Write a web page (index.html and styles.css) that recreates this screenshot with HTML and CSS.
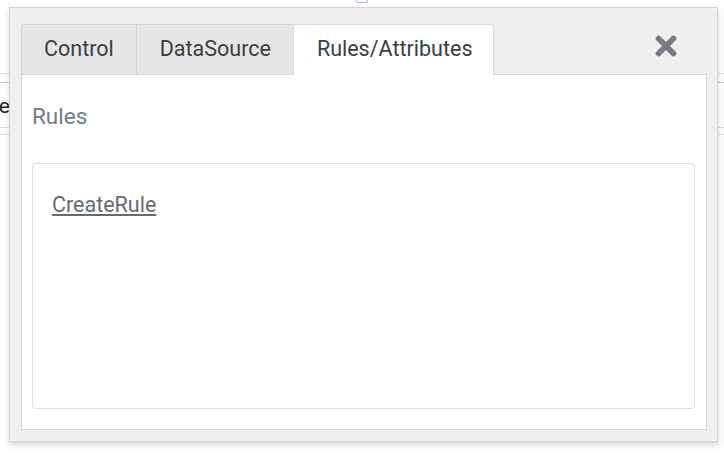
FILE: index.html
```html
<!DOCTYPE html>
<html>
<head>
<meta charset="utf-8">
<link rel="stylesheet" href="styles.css">
</head>
<body>
<div class="page">
  <div class="bg">
    <div class="bg-marker"></div>
    <div class="bg-row bg-row-a"></div>
    <div class="bg-row bg-row-b"><span class="bg-text">Name</span></div>
    <div class="bg-row bg-row-c"></div>
  </div>

  <div class="dialog">
    <div class="tabbar">
      <div class="tabs">
        <div class="tab">Control</div>
        <div class="tab">DataSource</div>
        <div class="tab active">Rules/Attributes</div>
      </div>
      <button class="close" aria-label="Close">
        <svg width="24" height="24" viewBox="0 0 24 24">
          <path d="M4.5 4.5 L19.5 19.5 M19.5 4.5 L4.5 19.5" stroke="#777a80" stroke-width="5.6" stroke-linecap="round" fill="none"/>
        </svg>
      </button>
    </div>
    <div class="panel">
      <h2 class="panel-title">Rules</h2>
      <div class="rules-box">
        <a class="create-link" href="#">CreateRule</a>
      </div>
    </div>
  </div>
</div>
</body>
</html>
```

FILE: styles.css
```css
* { box-sizing: border-box; }

html, body {
  margin: 0;
  padding: 0;
  background: #ffffff;
}

body {
  font-family: Roboto, "Liberation Sans", Arial, sans-serif;
}

.page {
  position: relative;
  width: 724px;
  height: 454px;
  overflow: hidden;
  background: #ffffff;
}

/* background page peeking around the dialog */
.bg {
  display: flex;
  flex-direction: column;
  padding-top: 73px;
}

.bg-marker {
  position: absolute;
  left: 356px;
  top: -8px;
  width: 12px;
  height: 11px;
  border: 1px solid #9db8ec;
  border-radius: 2px;
}

.bg-row {
  border-top: 1px solid #dcdcdc;
}

.bg-row-a {
  height: 9px;
}

.bg-row-b {
  height: 45px;
  border-top-color: #c8c8c8;
  padding-top: 11px;
  overflow: hidden;
}

.bg-text {
  display: inline-block;
  margin-left: -46px;
  font-size: 21px;
  color: #222;
  line-height: 24px;
}

.bg-row-c {
  height: 8px;
  border-bottom: 1px solid #dcdcdc;
}

/* dialog */
.dialog {
  position: absolute;
  left: 9px;
  top: 7px;
  width: 709px;
  height: 435px;
  background: #efefef;
  border: 1px solid #d4d4d6;
  box-shadow: 0 3px 6px rgba(60, 70, 100, 0.22);
  padding: 16px 10px 11px 11px;
  display: flex;
  flex-direction: column;
}

.tabbar {
  display: flex;
  align-items: flex-end;
  justify-content: space-between;
  height: 50px;
}

.tabs {
  display: flex;
  align-items: flex-end;
  height: 50px;
}

.tab {
  height: 50px;
  padding: 0 22px 2px;
  display: flex;
  align-items: center;
  font-size: 21.5px;
  color: #3a3d42;
  background: #e6e6e6;
  border: 1px solid #d4d4d4;
  border-bottom: none;
  border-right: none;
  white-space: nowrap;
}

.tab:first-child {
  border-top-left-radius: 3px;
}

.tab:nth-child(2) {
  padding: 0 22px 2px 23px;
}

.tab.active {
  background: #ffffff;
  border: 1px solid #d8d8d8;
  border-bottom: none;
  border-radius: 4px 4px 0 0;
  height: 51px;
  margin-bottom: -1px;
  position: relative;
  z-index: 1;
  padding: 0 21px 3px 23px;
}

.close {
  align-self: flex-start;
  margin: 10px 29px 0 0;
  padding: 0;
  border: none;
  background: transparent;
  width: 24px;
  height: 24px;
  display: flex;
}

.panel {
  flex: 1;
  background: #ffffff;
  border: 1px solid #d8d8d8;
  padding: 0 11px 20px 10px;
  display: flex;
  flex-direction: column;
}

.panel-title {
  margin: 28px 0 34px 0;
  font-size: 22.5px;
  font-weight: 400;
  line-height: 26px;
  color: #737d8a;
}

.rules-box {
  flex: 1;
  border: 1px solid #dde0e5;
  border-radius: 4px;
  padding: 28px 19px;
}

.create-link {
  font-size: 21.5px;
  line-height: 25px;
  color: #646b75;
  text-decoration: underline;
  text-underline-offset: 2px;
}
```
